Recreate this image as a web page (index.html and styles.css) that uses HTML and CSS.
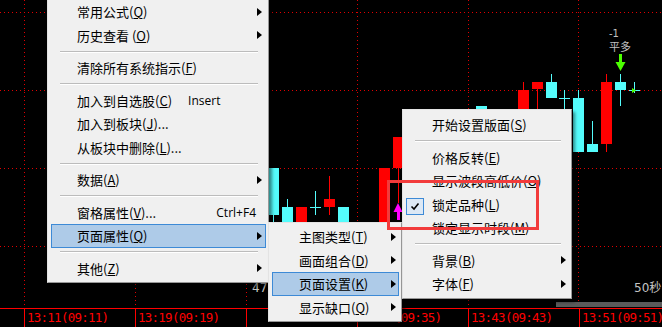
FILE: index.html
```html
<!DOCTYPE html>
<html lang="zh-CN">
<head>
  <meta charset="UTF-8">
  <title>分时图 - 右键菜单</title>
  <link rel="stylesheet" href="styles.css">
</head>
<body>
  <div class="screen">
    <svg class="plot" width="662" height="308" viewBox="0 0 662 308">
      <g class="grid">
        <line x1="0" y1="12.5" x2="662" y2="12.5"/>
        <line x1="0" y1="90.5" x2="662" y2="90.5"/>
        <line x1="0" y1="168.5" x2="662" y2="168.5"/>
        <line x1="0" y1="246.5" x2="662" y2="246.5"/>
        <line x1="24.5" y1="0" x2="24.5" y2="308"/>
        <line x1="135.5" y1="0" x2="135.5" y2="308"/>
        <line x1="246.5" y1="0" x2="246.5" y2="308"/>
        <line x1="357.5" y1="0" x2="357.5" y2="308"/>
        <line x1="468.5" y1="0" x2="468.5" y2="308"/>
        <line x1="578.5" y1="0" x2="578.5" y2="308"/>
      </g>

      <!-- left group, mostly under the menus -->
      <g class="up">
        <rect x="268" y="168" width="11" height="47"/><rect x="273" y="215" width="1" height="10"/>
        <rect x="282" y="207" width="11" height="20"/><rect x="287" y="199" width="1" height="8"/>
        <rect x="310" y="207" width="11" height="1"/><rect x="315" y="191" width="1" height="24"/>
        <rect x="338" y="207" width="11" height="20"/>
      </g>
      <g class="down">
        <rect x="296" y="207" width="11" height="20"/>
        <rect x="324" y="199" width="11" height="8"/><rect x="329" y="176" width="1" height="39"/>
        <rect x="379" y="168" width="11" height="60"/>
        <rect x="393" y="137" width="11" height="31"/><rect x="398" y="168" width="1" height="35"/>
      </g>
      <g class="buy">
        <polygon points="398,203 393.5,212 402.5,212"/>
        <rect x="397" y="212" width="3" height="8"/>
      </g>

      <!-- right group -->
      <g class="up">
        <rect x="476" y="106" width="11" height="10"/>
        <rect x="546" y="82" width="11" height="16"/><rect x="551" y="74" width="1" height="8"/>
        <rect x="559" y="98" width="11" height="1"/><rect x="564" y="90" width="1" height="25"/>
        <rect x="573" y="98" width="11" height="54"/><rect x="578" y="90" width="1" height="8"/>
        <rect x="587" y="144" width="11" height="8"/><rect x="592" y="121" width="1" height="23"/>
        <rect x="615" y="82" width="11" height="8"/><rect x="620" y="74" width="1" height="32"/>
        <rect x="629" y="90" width="11" height="1"/><rect x="634" y="82" width="1" height="11"/>
      </g>
      <g class="down">
        <rect x="518" y="90" width="11" height="40"/><rect x="523" y="82" width="1" height="8"/>
        <rect x="532" y="82" width="11" height="7"/><rect x="537" y="89" width="1" height="25"/>
        <rect x="601" y="82" width="11" height="62"/><rect x="606" y="74" width="1" height="78"/>
      </g>
      <g class="sell">
        <rect x="619" y="54" width="3" height="8"/>
        <polygon points="615.5,62 625.5,62 620.5,71"/>
        <polygon points="632,88 632,93 636,90.5"/>
      </g>

      <text class="note note-num" x="609" y="37">-1</text>
      <text class="note" x="609" y="51">平多</text>
      <text class="scale" x="252" y="292">47</text>
      <text class="scale" x="634" y="292">50秒</text>
      <rect class="scroll" x="556" y="302" width="106" height="5"/>
    </svg>

    <div class="axis">
      <span class="tick">13:11(09:11)</span>
      <span class="tick">13:19(09:19)</span>
      <span class="tick"></span>
      <span class="tick">13:35(09:35)</span>
      <span class="tick">13:43(09:43)</span>
      <span class="tick">13:51(09:51)</span>
    </div>

    <div class="menu menu-main">
      <div class="item sub">常用公式(<u>Q</u>)</div>
      <div class="item sub">历史查看 (<u>O</u>)</div>
      <div class="sep"></div>
      <div class="item">清除所有系统指示(<u>F</u>)</div>
      <div class="sep"></div>
      <div class="item">加入到自选股(<u>C</u>)<span class="key key-insert">Insert</span></div>
      <div class="item">加入到板块(<u>J</u>)...</div>
      <div class="item">从板块中删除(<u>L</u>)...</div>
      <div class="sep"></div>
      <div class="item sub">数据(<u>A</u>)</div>
      <div class="sep"></div>
      <div class="item">窗格属性(<u>V</u>)...<span class="key key-ctrl">Ctrl+F4</span></div>
      <div class="item sub active">页面属性(<u>Q</u>)</div>
      <div class="sep"></div>
      <div class="item sub">其他(<u>Z</u>)</div>
    </div>

    <div class="menu menu-page">
      <div class="item sub">主图类型(<u>T</u>)</div>
      <div class="item sub">画面组合(<u>D</u>)</div>
      <div class="item sub active">页面设置(<u>K</u>)</div>
      <div class="item sub">显示缺口(<u>Q</u>)</div>
    </div>

    <div class="menu menu-setup">
      <div class="item">开始设置版面(<u>S</u>)</div>
      <div class="sep"></div>
      <div class="item">价格反转(<u>E</u>)</div>
      <div class="item">显示波段高低价(<u>O</u>)</div>
      <div class="item checked">
        <span class="check">
          <svg width="16" height="15" viewBox="0 0 16 15"><path d="M4.5 7.5 L7 10 L11.5 4.5"/></svg>
        </span>锁定品种(<u>L</u>)
      </div>
      <div class="item">锁定显示时段(<u>M</u>)</div>
      <div class="sep"></div>
      <div class="item sub">背景(<u>B</u>)</div>
      <div class="item sub">字体(<u>F</u>)</div>
    </div>

    <div class="mark"></div>
  </div>
</body>
</html>
```

FILE: styles.css
```css
body {
  margin: 0;
  background: #000;
}
.screen {
  position: relative;
  width: 662px;
  height: 327px;
  overflow: hidden;
  background: #000;
}
.plot {
  display: block;
}
.grid line {
  stroke: #e00000;
  stroke-width: 1;
  stroke-dasharray: 1 3;
  shape-rendering: crispEdges;
}
.up rect {
  fill: #54fcfc;
}
.down rect {
  fill: #ff0000;
}
.buy polygon, .buy rect {
  fill: #ff00ff;
}
.sell polygon, .sell rect {
  fill: #4cff00;
}
.note {
  fill: #c0c0c0;
  font: 11px "Noto Sans CJK SC", sans-serif;
}
.note-num {
  font: 10px "DejaVu Sans", sans-serif;
}
.scale {
  fill: #c4c4c4;
  font: 12px "DejaVu Sans", "Noto Sans CJK SC", sans-serif;
}
.scroll {
  fill: #5a5a5a;
}

/* time axis */
.axis {
  display: flex;
  height: 19px;
  padding-left: 24px;
  border-top: 1px solid #ff0000;
  box-sizing: border-box;
}
.tick {
  flex: 0 0 111px;
  box-sizing: border-box;
  border-left: 1px solid #ff0000;
  padding: 2px 0 0 2px;
  color: #ff0000;
  font: 12.5px "DejaVu Sans Mono", monospace;
  letter-spacing: -0.75px;
  line-height: 13px;
  white-space: nowrap;
  overflow: hidden;
}

/* popup menus */
.menu {
  position: absolute;
  box-sizing: border-box;
  background: #f0f0f0;
  border: 1px solid #979797;
  border-left-color: #e3e3e3;
  border-top-color: #e3e3e3;
  padding: 2px 2px 2px 3px;
  box-shadow: 3px 3px 3px rgba(0, 0, 0, 0.45);
  font: 13px "Noto Sans CJK SC", sans-serif;
  color: #000;
}
.menu-main {
  left: 47px;
  top: -3px;
  width: 222px;
}
.menu-page {
  left: 268px;
  top: 222px;
  width: 134px;
}
.menu-setup {
  left: 402px;
  top: 109px;
  width: 170px;
  padding-top: 3px;
}
.item {
  position: relative;
  display: flex;
  align-items: center;
  height: 23.5px;
  box-sizing: border-box;
  border: 1px solid transparent;
  padding-left: 25px;
  white-space: nowrap;
}
.menu-page .item {
  padding-left: 26px;
}
.item u {
  text-decoration-thickness: 1px;
  text-underline-offset: 1px;
}
.item.active {
  background: #aecbe8;
  border-color: #3d8ad6;
}
.item.sub::after {
  content: "";
  margin-left: auto;
  margin-right: 3px;
  border-left: 5px solid #000;
  border-top: 4px solid transparent;
  border-bottom: 4px solid transparent;
}
.menu-page .item.sub::after,
.menu-setup .item.sub::after {
  margin-right: 2px;
}
.key {
  font-family: "Open Sans", "Liberation Sans", sans-serif;
  font-size: 12px;
}
.key-insert {
  margin-left: 16px;
}
.key-ctrl {
  margin-left: auto;
  margin-right: 9px;
}
.sep {
  display: flex;
  align-items: center;
  height: 9px;
  padding: 0 8px 0 9px;
}
.sep::before {
  content: "";
  flex: 1;
  height: 1px;
  background: #bcbcbc;
  border-bottom: 1px solid #fff;
}
.check {
  position: absolute;
  left: -1px;
  top: 4px;
  width: 18px;
  height: 17px;
  box-sizing: border-box;
  border: 1px solid #3d8ad6;
  background: #dce8f5;
  display: flex;
  align-items: center;
  justify-content: center;
}
.check path {
  fill: none;
  stroke: #000;
  stroke-width: 1.6;
}

/* red annotation box drawn over the screenshot */
.mark {
  position: absolute;
  left: 387px;
  top: 180px;
  width: 152px;
  height: 50px;
  box-sizing: border-box;
  border: 3px solid #f23b3b;
}
```
